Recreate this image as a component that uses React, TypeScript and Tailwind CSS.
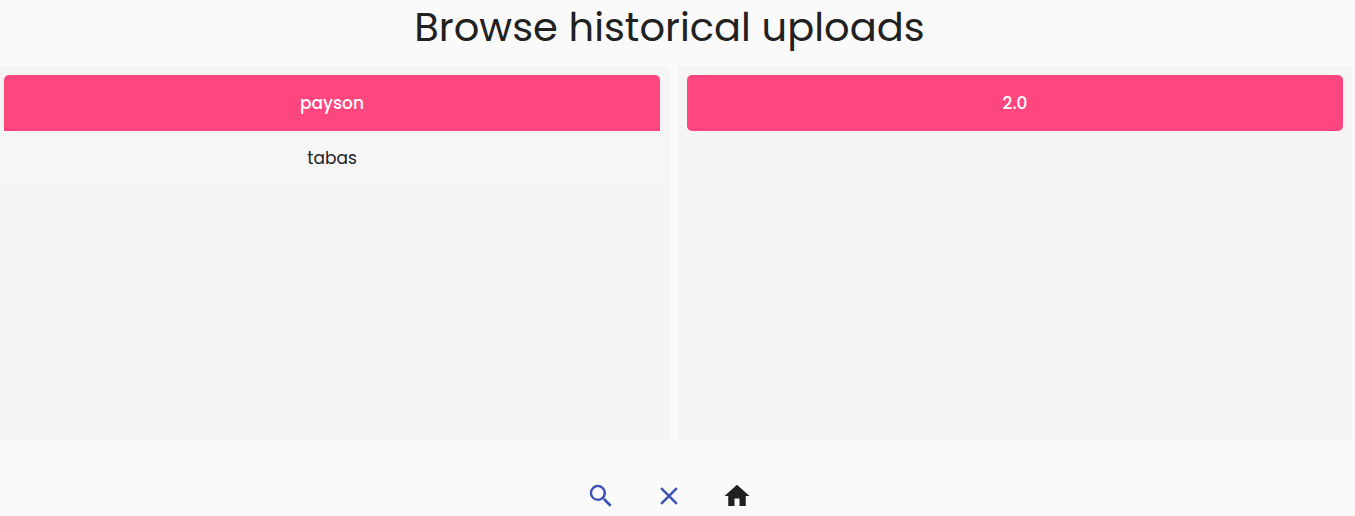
import { useState } from 'react';

const icons = {
  search:
    'M9.5 3A6.5 6.5 0 0 1 16 9.5c0 1.61-.59 3.09-1.56 4.23l.27.27h.79l5 5-1.5 1.5-5-5v-.79l-.27-.27A6.516 6.516 0 0 1 9.5 16a6.5 6.5 0 0 1 0-13m0 2C7 5 5 7 5 9.5S7 14 9.5 14 14 12 14 9.5 12 5 9.5 5Z',
  close:
    'M19 6.41 17.59 5 12 10.59 6.41 5 5 6.41 10.59 12 5 17.59 6.41 19 12 13.41 17.59 19 19 17.59 13.41 12 19 6.41Z',
  home: 'M10 20v-6h4v6h5v-8h3L12 3 2 12h3v8h5Z',
};

function Icon({ path }: { path: string }) {
  return (
    <svg viewBox="0 0 24 24" className="size-[30px]" fill="currentColor" aria-hidden="true">
      <path d={path} />
    </svg>
  );
}

function ListPanel({ label, items }: { label: string; items: string[] }) {
  const [selected, setSelected] = useState(items[0]);
  return (
    <section aria-label={label} className="min-h-[375px] bg-[#f5f5f5] p-[9px]">
      <ul className="overflow-hidden rounded-[5px] bg-[#f6f6f6]">
        {items.map((item) => (
          <li key={item}>
            <button
              type="button"
              aria-pressed={item === selected}
              onClick={() => setSelected(item)}
              className={
                item === selected
                  ? 'h-14 w-full bg-[#ff467e] text-[17px] leading-6 font-medium text-white'
                  : 'h-[54px] w-full text-[17px] leading-6 font-normal text-[#212121]'
              }
            >
              {item}
            </button>
          </li>
        ))}
      </ul>
    </section>
  );
}

export default function App() {
  return (
    <main className="min-h-screen overflow-hidden bg-[#fafafa] font-['Poppins','Inter',sans-serif] text-[#212121]">
      <h1 className="pt-0.5 pr-4 pb-3.5 text-center text-[40px] leading-[50px] font-normal">
        Browse historical uploads
      </h1>
      <div className="mr-[3px] -ml-[5px] grid grid-cols-2 gap-[9px]">
        <ListPanel label="Projects" items={['payson', 'tabas']} />
        <ListPanel label="Versions" items={['2.0']} />
      </div>
      <nav aria-label="Actions" className="flex justify-center gap-[38px] pt-10 pr-[18px]">
        <button type="button" aria-label="Search" className="text-[#3f51b5]">
          <Icon path={icons.search} />
        </button>
        <button type="button" aria-label="Clear" className="text-[#3f51b5]">
          <Icon path={icons.close} />
        </button>
        <a href="/" aria-label="Home">
          <Icon path={icons.home} />
        </a>
      </nav>
    </main>
  );
}
